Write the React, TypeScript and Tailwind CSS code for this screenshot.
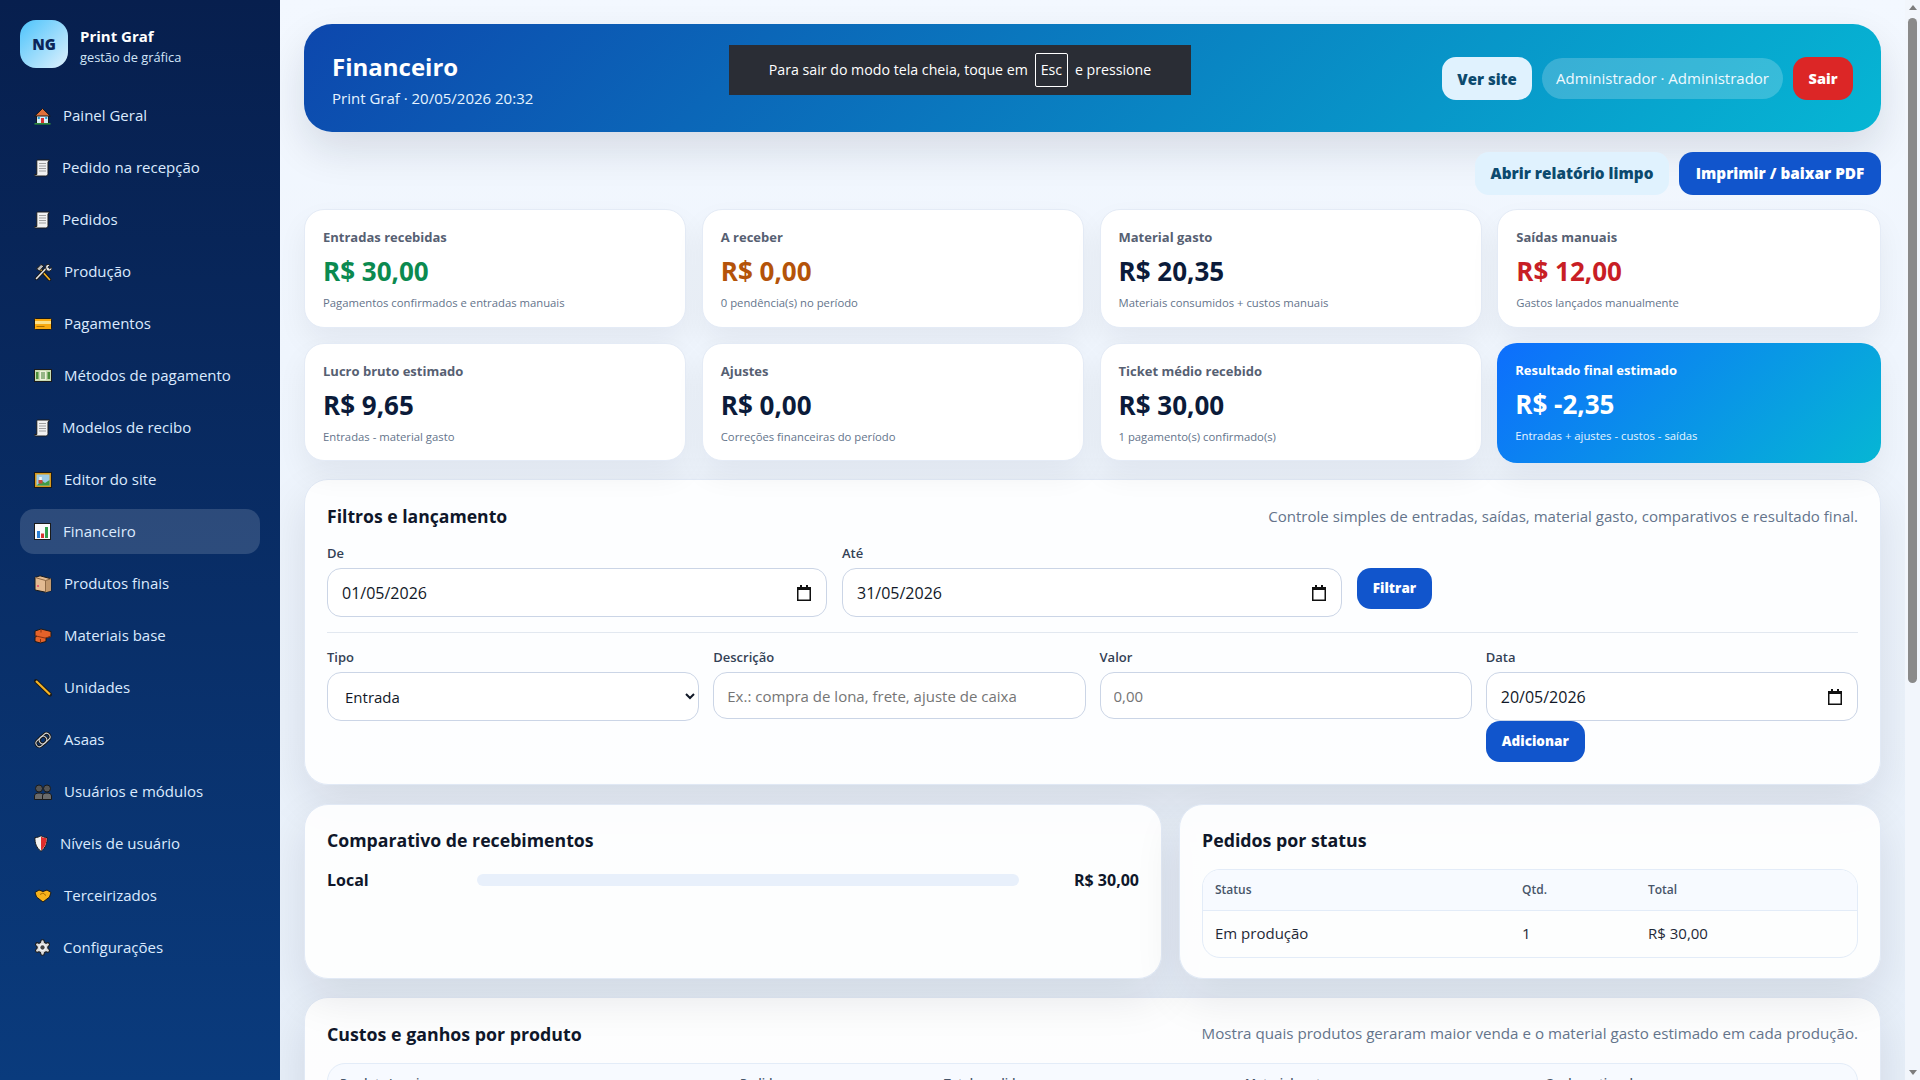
import React from 'react';

const Outline = '#1a1a1a';

const House = () => (
  <svg width="17" height="18" viewBox="0 0 17 18">
    <path d="M2.500 8h12v8.500h-12z" fill="#d9edf7" stroke={Outline} strokeWidth="1" />
    <path d="M0.800 9 8.500 1.500 16.200 9z" fill="#e0703a" stroke={Outline} strokeWidth="1" strokeLinejoin="round" />
    <rect x="7" y="11" width="3" height="5.500" fill="#d8322f" />
    <rect x="3.800" y="10" width="2" height="2" fill="#2a9fd6" />
    <rect x="11.200" y="10" width="2" height="2" fill="#2a9fd6" />
    <rect x="0.500" y="16" width="16" height="1.600" fill="#2e8b3d" />
  </svg>
);

const Receipt = () => (
  <svg width="16" height="18" viewBox="0 0 16 18">
    <path d="M3.500 1h12l-1.500 2v11.500c0 1.500-1 2.500-2.500 2.500H2c-1 0-1.500-.8-1.500-1.500h2.300V2.500C2.800 1.800 3 1 3.500 1z" fill="#f2f2f2" stroke={Outline} strokeWidth="1" strokeLinejoin="round" />
    <path d="M5 4.500h7M5 7h7M5 9.500h7M5 12h7" stroke="#a0a0a0" strokeWidth="1" />
  </svg>
);

const Tools = () => (
  <svg width="18" height="18" viewBox="0 0 18 18">
    <path d="M15.500 16.500 5 5" stroke={Outline} strokeWidth="3.400" strokeLinecap="round" />
    <path d="M15.500 16.500 5.500 5.500" stroke="#f5b324" strokeWidth="1.600" strokeLinecap="round" />
    <path d="M2.500 6 7 1.500l3 1.500-4.500 5z" fill="#bdbdbd" stroke={Outline} strokeWidth="1" strokeLinejoin="round" />
    <path d="M2.500 15.500 12 5.500" stroke={Outline} strokeWidth="3.400" strokeLinecap="round" />
    <path d="M2.500 15.500 12 5.500" stroke="#e4e4e4" strokeWidth="1.600" strokeLinecap="round" />
    <path d="M12 2.200c1.500-1 3-.9 4 0l-2 2 1.600 1.600 2-1.600c.6 1.600 0 3-1.600 3.800-1.200.5-2.600 0-3.400-.8-1-1.400-1.200-3.400-.6-5z" fill="#e4e4e4" stroke={Outline} strokeWidth="1" />
  </svg>
);

const Card = () => (
  <svg width="18" height="12" viewBox="0 0 18 12">
    <rect x="0.500" y="0.500" width="17" height="11" rx="1" fill="#f9a90f" stroke={Outline} strokeWidth="1" />
    <rect x="1" y="3" width="16" height="3" fill="#fbe08a" />
    <rect x="2.500" y="8" width="8" height="1" fill="#a86c00" />
  </svg>
);

const Money = () => (
  <svg width="18" height="13" viewBox="0 0 18 13">
    <rect x="0.500" y="0.500" width="17" height="12" fill="#c9dbb3" stroke={Outline} strokeWidth="1" />
    <rect x="6" y="2" width="6" height="9" fill="#eef3dc" />
    <path d="M2 3h2.500v7H2zM13.500 3H16v7h-2.500z" fill="#4d8f3c" />
    <path d="M8 3v7M10 3v7" stroke="#3f7a32" strokeWidth="1" />
  </svg>
);

const Picture = () => (
  <svg width="18" height="16" viewBox="0 0 18 16">
    <rect x="0.500" y="0.500" width="17" height="15" fill="#d79a1c" stroke={Outline} strokeWidth="1" />
    <rect x="2.500" y="2.500" width="13" height="11" fill="#9ccbe6" />
    <path d="M2.500 13.500 8 9l3 2 4.500-3v5.500z" fill="#3f9c44" />
    <rect x="4.500" y="8" width="4" height="3.500" fill="#c84b3a" />
    <rect x="5.300" y="5" width="2.500" height="3" fill="#f4f4f4" />
  </svg>
);

const Chart = () => (
  <svg width="17" height="17" viewBox="0 0 17 17">
    <rect x="0.500" y="0.500" width="16" height="16" fill="#fafafa" stroke={Outline} strokeWidth="1" />
    <rect x="3" y="8" width="3" height="7" fill="#2b7fd4" />
    <rect x="7" y="10.500" width="3" height="4.500" fill="#d8322f" />
    <rect x="11" y="4" width="3" height="11" fill="#32a04a" />
  </svg>
);

const Box = () => (
  <svg width="18" height="18" viewBox="0 0 18 18">
    <path d="M1 2.500 6 0.800l11 3v12l-5.500 1.400L1 15z" fill="#e3bb92" stroke={Outline} strokeWidth="1" strokeLinejoin="round" />
    <path d="M11.500 5.500 17 3.800v12l-5.500 1.400z" fill="#c49a6e" />
    <path d="M1 2.500 11.500 5.500 17 3.800M11.500 5.500v11.700" fill="none" stroke="#8f6a45" strokeWidth="1" />
    <circle cx="4" cy="11" r="1" fill="#e8476a" />
  </svg>
);

const Brick = () => (
  <svg width="18" height="16" viewBox="0 0 18 16">
    <path d="M1 3 7 1l10 2.500v5L12 10v3.500L6.500 15 1 13.500V9L3 8.400 1 7.800z" fill="#e4622a" stroke={Outline} strokeWidth="1" strokeLinejoin="round" />
    <path d="M1 7.800 11 10l6-1.500M7 1.500v3M6.500 15v-4" fill="none" stroke="#8a3210" strokeWidth="1" />
  </svg>
);

const Ruler = () => (
  <svg width="18" height="18" viewBox="0 0 18 18">
    <path d="M2 2 16 15.500" stroke={Outline} strokeWidth="4" strokeLinecap="round" />
    <path d="M2 2 16 15.500" stroke="#f5b324" strokeWidth="2.200" />
  </svg>
);

const Link = () => (
  <svg width="18" height="18" viewBox="0 0 18 18">
    <g transform="rotate(-42 9 9)" fill="none">
      <rect x="0.800" y="5.500" width="12" height="7" rx="3.500" stroke={Outline} strokeWidth="3" />
      <rect x="5.200" y="5.500" width="12" height="7" rx="3.500" stroke={Outline} strokeWidth="3" />
      <rect x="0.800" y="5.500" width="12" height="7" rx="3.500" stroke="#dcdcdc" strokeWidth="1" />
      <rect x="5.200" y="5.500" width="12" height="7" rx="3.500" stroke="#dcdcdc" strokeWidth="1" />
    </g>
  </svg>
);

const People = () => (
  <svg width="18" height="16" viewBox="0 0 18 16">
    <circle cx="5" cy="4.500" r="3.500" fill="#555555" stroke={Outline} strokeWidth="1" />
    <circle cx="13" cy="4.500" r="3.500" fill="#555555" stroke={Outline} strokeWidth="1" />
    <path d="M0.500 15.500v-3.500c0-2 2-3 4.500-3s4.500 1 4.500 3v3.500z" fill="#6a6a6a" stroke={Outline} strokeWidth="1" />
    <path d="M8.500 15.500v-3.500c0-2 2-3 4.500-3s4.500 1 4.500 3v3.500z" fill="#6a6a6a" stroke={Outline} strokeWidth="1" />
  </svg>
);

const Shield = () => (
  <svg width="14" height="17" viewBox="0 0 14 17">
    <path d="M1 2.500c2.200 0 4.300-.6 6-1.800 1.700 1.200 3.800 1.800 6 1.800 .4 5.500-1.500 10.500-6 13.800C2.500 13 .6 8 1 2.500z" fill="#f2f2f2" stroke={Outline} strokeWidth="1" strokeLinejoin="round" />
    <path d="M7 1.500c1.500 1 3.600 1.600 5.400 1.600.3 4.800-1.400 9.500-5.400 12.300z" fill="#e02c2c" />
  </svg>
);

const Handshake = () => (
  <svg width="18" height="14" viewBox="0 0 18 14">
    <path d="M1 3.500 5 1l4 1.500L13 1l4 2.500-1.500 4.500L9 13 2.500 8z" fill="#f7b21b" stroke={Outline} strokeWidth="1" strokeLinejoin="round" />
    <path d="M6 5.500 9 4l3 2.500" fill="none" stroke="#a86c00" strokeWidth="1" />
  </svg>
);

const Gear = () => (
  <svg width="17" height="17" viewBox="1 1 22 22">
    <path
      d="M12.220 2h-.44a2 2 0 0 0-2 2v.18a2 2 0 0 1-1 1.730l-.43.25a2 2 0 0 1-2 0l-.15-.08a2 2 0 0 0-2.730.73l-.22.38a2 2 0 0 0 .73 2.730l.15.1a2 2 0 0 1 1 1.720v.51a2 2 0 0 1-1 1.740l-.15.09a2 2 0 0 0-.73 2.730l.22.38a2 2 0 0 0 2.730.73l.15-.08a2 2 0 0 1 2 0l.43.25a2 2 0 0 1 1 1.730V20a2 2 0 0 0 2 2h.44a2 2 0 0 0 2-2v-.18a2 2 0 0 1 1-1.730l.43-.25a2 2 0 0 1 2 0l.15.08a2 2 0 0 0 2.730-.73l.22-.39a2 2 0 0 0-.73-2.730l-.15-.08a2 2 0 0 1-1-1.740v-.5a2 2 0 0 1 1-1.740l.15-.09a2 2 0 0 0 .73-2.730l-.22-.38a2 2 0 0 0-2.730-.73l-.15.08a2 2 0 0 1-2 0l-.43-.25a2 2 0 0 1-1-1.730V4a2 2 0 0 0-2-2z"
      fill="#dddddd"
      stroke={Outline}
      strokeWidth="1.400"
    />
    <circle cx="12" cy="12" r="4.400" fill="#f5f5f5" />
    <circle cx="12" cy="12" r="2.800" fill="#444444" />
  </svg>
);

const navItems: { label: string; icon: React.ReactNode; active?: boolean }[] = [
  { label: 'Painel Geral', icon: <House /> },
  { label: 'Pedido na recepção', icon: <Receipt /> },
  { label: 'Pedidos', icon: <Receipt /> },
  { label: 'Produção', icon: <Tools /> },
  { label: 'Pagamentos', icon: <Card /> },
  { label: 'Métodos de pagamento', icon: <Money /> },
  { label: 'Modelos de recibo', icon: <Receipt /> },
  { label: 'Editor do site', icon: <Picture /> },
  { label: 'Financeiro', icon: <Chart />, active: true },
  { label: 'Produtos finais', icon: <Box /> },
  { label: 'Materiais base', icon: <Brick /> },
  { label: 'Unidades', icon: <Ruler /> },
  { label: 'Asaas', icon: <Link /> },
  { label: 'Usuários e módulos', icon: <People /> },
  { label: 'Níveis de usuário', icon: <Shield /> },
  { label: 'Terceirizados', icon: <Handshake /> },
  { label: 'Configurações', icon: <Gear /> },
];

const metrics = [
  { label: 'Entradas recebidas', value: 'R$ 30,00', hint: 'Pagamentos confirmados e entradas manuais', color: 'text-[#0b8a50]' },
  { label: 'A receber', value: 'R$ 0,00', hint: '0 pendência(s) no período', color: 'text-[#b45309]' },
  { label: 'Material gasto', value: 'R$ 20,35', hint: 'Materiais consumidos + custos manuais', color: 'text-[#0b1b3a]' },
  { label: 'Saídas manuais', value: 'R$ 12,00', hint: 'Gastos lançados manualmente', color: 'text-[#c81e25]' },
  { label: 'Lucro bruto estimado', value: 'R$ 9,65', hint: 'Entradas - material gasto', color: 'text-[#0b1b3a]' },
  { label: 'Ajustes', value: 'R$ 0,00', hint: 'Correções financeiras do período', color: 'text-[#0b1b3a]' },
  { label: 'Ticket médio recebido', value: 'R$ 30,00', hint: '1 pagamento(s) confirmado(s)', color: 'text-[#0b1b3a]' },
];

const panel = 'rounded-[24px] border border-[#e1e9f5] bg-white/90 shadow-[0_18px_45px_rgba(15,23,42,0.1)]';
const fieldLabel = 'mb-[5px] block text-[13px] font-semibold leading-[20px] text-[#334155]';
const field = 'rounded-[14px] border border-[#cbd5e6] bg-white px-[13px] text-[15px] text-[#111827]';
const primaryBtn = 'rounded-[14px] bg-[#1155cc] text-[13.5px] font-extrabold text-white';
const lightBtn = 'h-[43px] rounded-[14px] bg-[#e0f2fe] font-extrabold text-[#0c4a6e]';

const CalendarIcon = () => (
  <svg width="14" height="16" viewBox="0 0 14 16" className="shrink-0">
    <path d="M3 0h2v2h4V0h2v2h3v14H0V2h3z" fill="#111111" />
    <rect x="1.500" y="5" width="11" height="9.500" fill="#ffffff" />
  </svg>
);

const DateField = ({ value }: { value: string }) => (
  <div className={`${field} flex h-[49px] items-center justify-between pl-[14px] pr-[15px]`}>
    <span className="text-[16px]">{value}</span>
    <CalendarIcon />
  </div>
);

const App: React.FC = () => {
  return (
    <div className="relative flex h-screen overflow-hidden bg-gradient-to-b from-[#f3f8ff] to-[#e7eff9] font-['Open_Sans',sans-serif]">
      <aside className="flex w-[280px] shrink-0 flex-col bg-gradient-to-b from-[#071f4e] to-[#0a3b7d] px-5 pt-5">
        <div className="flex items-center gap-3">
          <div className="flex h-12 w-12 items-center justify-center rounded-[16px] bg-[linear-gradient(135deg,#4cc3fb,#dff1fd)] text-[15px] font-extrabold text-[#0a2558]">
            NG
          </div>
          <div className="pt-[4px]">
            <div className="text-[15px] font-bold leading-[22px] text-white">Print Graf</div>
            <div className="text-[12.8px] leading-[20px] text-[#d3e6f8]">gestão de gráfica</div>
          </div>
        </div>
        <nav className="mt-[25px] flex flex-col gap-[7px]">
          {navItems.map((item) => (
            <a
              key={item.label}
              className={`flex h-[45px] items-center gap-[12px] rounded-[14px] px-[14px] text-[15px] text-[#dbeafe] ${item.active ? 'bg-white/15' : ''}`}
            >
              <span className="flex shrink-0 items-center">{item.icon}</span>
              {item.label}
            </a>
          ))}
        </nav>
      </aside>

      <main className="min-w-0 flex-1 overflow-hidden p-6">
        <header className="flex h-[108px] items-center justify-between rounded-[28px] bg-[linear-gradient(135deg,#0d47ad,#06b6d4)] px-[28px] text-white shadow-[0_18px_40px_rgba(15,23,42,0.12)]">
          <div>
            <h1 className="pt-[2px] text-[24px] font-bold leading-[34px]">Financeiro</h1>
            <p className="mt-[3px] text-[15px] leading-[22px] text-[#e6f4ff]">Print Graf · 20/05/2026 20:32</p>
          </div>
          <div className="flex items-center gap-[10px]">
            <button className={`${lightBtn} w-[90px] pt-[2px] text-[15px]`}>Ver site</button>
            <span className="flex h-[41px] w-[241px] items-center justify-center rounded-full bg-white/20 text-[15px] text-[#f0f9ff]">Administrador · Administrador</span>
            <button className="h-[43px] w-[60px] rounded-[14px] bg-[#dc2626] pt-[2px] text-[14.5px] font-extrabold text-white">Sair</button>
          </div>
        </header>

        <div className="mt-5 flex justify-end gap-[10px]">
          <button className={`${lightBtn} w-[194px] text-[15.3px]`}>Abrir relatório limpo</button>
          <button className="h-[43px] w-[202px] rounded-[14px] bg-[#1155cc] text-[15.3px] font-extrabold text-white">Imprimir / baixar PDF</button>
        </div>

        <section className="mt-[14px] grid grid-cols-[382px_382px_382px_1fr] gap-x-[15.75px] gap-y-[15px]">
          {metrics.map((m) => (
            <div key={m.label} className="h-[118.5px] rounded-[20px] border border-[#e4ebf6] bg-white px-[18px] pt-[17px] shadow-[0_14px_30px_rgba(15,23,42,0.06)]">
              <div className="text-[13px] font-bold leading-[20px] text-[#566072]">{m.label}</div>
              <div className={`mt-[6px] text-[26px] font-bold leading-[36px] ${m.color}`}>{m.value}</div>
              <div className="mt-[5px] text-[11.3px] leading-[18px] text-[#64748b]">{m.hint}</div>
            </div>
          ))}
          <div className="h-[120px] rounded-[20px] bg-[linear-gradient(135deg,#0d6efd,#06b6d4)] px-[18px] pt-[17px] text-white shadow-[0_14px_30px_rgba(15,23,42,0.06)]">
            <div className="text-[13px] font-bold leading-[20px]">Resultado final estimado</div>
            <div className="mt-[6px] text-[26px] font-bold leading-[36px]">R$ -2,35</div>
            <div className="mt-[5px] text-[11.3px] leading-[18px] text-[#e6f4ff]">Entradas + ajustes - custos - saídas</div>
          </div>
        </section>

        <section className={`${panel} mt-[16.5px] h-[305.5px] px-[22px] pt-[22px]`}>
          <div className="flex items-center justify-between">
            <h2 className="text-[17.6px] font-bold leading-[28px] text-[#0f172a]">Filtros e lançamento</h2>
            <p className="text-[15.05px] text-[#64748b]">Controle simples de entradas, saídas, material gasto, comparativos e resultado final.</p>
          </div>
          <div className="mt-[13px] grid grid-cols-[500px_500px_auto] items-start gap-x-[15px]">
            <div>
              <label className={fieldLabel}>De</label>
              <DateField value="01/05/2026" />
            </div>
            <div>
              <label className={fieldLabel}>Até</label>
              <DateField value="31/05/2026" />
            </div>
            <button className={`${primaryBtn} mt-[25px] h-[41px] w-[75px]`}>Filtrar</button>
          </div>
          <div className="mt-[15px] border-t border-[#e2e8f0]" />
          <div className="mt-[14px] grid grid-cols-4 items-start gap-x-[14px]">
            <div>
              <label className={fieldLabel}>Tipo</label>
              <select defaultValue="Entrada" className={`${field} h-[49px] w-full`}>
                <option>Entrada</option>
                <option>Saída</option>
              </select>
            </div>
            <div>
              <label className={fieldLabel}>Descrição</label>
              <input className={`${field} h-[47px] w-full placeholder:text-[#757575]`} placeholder="Ex.: compra de lona, frete, ajuste de caixa" />
            </div>
            <div>
              <label className={fieldLabel}>Valor</label>
              <input className={`${field} h-[47px] w-full placeholder:text-[#757575]`} placeholder="0,00" />
            </div>
            <div>
              <label className={fieldLabel}>Data</label>
              <DateField value="20/05/2026" />
              <button className={`${primaryBtn} block h-[41px] w-[99px]`}>Adicionar</button>
            </div>
          </div>
        </section>

        <section className="mt-[19px] grid grid-cols-[858fr_702fr] gap-[17px]">
          <div className={`${panel} h-[175px] px-[22px] pt-[21px]`}>
            <h2 className="text-[17.7px] font-bold leading-[28px] text-[#0f172a]">Comparativo de recebimentos</h2>
            <div className="mt-[14px] grid grid-cols-[150px_1fr_120px] items-center">
              <span className="text-[16px] font-bold text-[#0f172a]">Local</span>
              <div className="h-[12px] rounded-full bg-[#e8f0fb]" />
              <span className="text-right text-[16px] font-bold text-[#0f172a]">R$ 30,00</span>
            </div>
          </div>
          <div className={`${panel} h-[175px] px-[22px] pt-[21px]`}>
            <h2 className="text-[17.8px] font-bold leading-[28px] text-[#0f172a]">Pedidos por status</h2>
            <div className="mt-[15px] overflow-hidden rounded-[18px] border border-[#e3ecf8]">
              <div className="grid h-[41px] grid-cols-[307px_126px_1fr] items-center border-b border-[#e3ecf8] bg-[#f7faff] px-3 text-[12px] font-semibold text-[#475569]">
                <span>Status</span>
                <span>Qtd.</span>
                <span>Total</span>
              </div>
              <div className="grid h-[46px] grid-cols-[307px_126px_1fr] items-center px-3 text-[15px] text-[#1f2937]">
                <span>Em produção</span>
                <span>1</span>
                <span>R$ 30,00</span>
              </div>
            </div>
          </div>
        </section>

        <section className={`${panel} mt-[18px] h-[300px] px-[22px] pt-[22px]`}>
          <div className="flex items-center justify-between">
            <h2 className="text-[17.8px] font-bold leading-[28px] text-[#0f172a]">Custos e ganhos por produto</h2>
            <p className="text-[15.15px] text-[#64748b]">Mostra quais produtos geraram maior venda e o material gasto estimado em cada produção.</p>
          </div>
          <div className="mt-[15px] overflow-hidden rounded-[18px] border border-[#e3ecf8] bg-[#f7faff]">
            <div className="grid h-[41px] grid-cols-[400px_204px_301px_1fr_1fr] items-center px-3 text-[12px] font-semibold text-[#475569]">
              <span>Produto/serviço</span>
              <span>Pedidos</span>
              <span>Total vendido</span>
              <span>Material gasto</span>
              <span>Ganho estimado</span>
            </div>
          </div>
        </section>
      </main>

      <div className="flex w-[15px] shrink-0 flex-col items-center bg-[#f2f6fc]">
        <span className="mt-[5px] h-0 w-0 border-x-[4px] border-b-[5px] border-x-transparent border-b-[#7d7d7d]" />
        <span className="mt-[8px] h-[665px] w-[9px] rounded-full bg-[#8a8a8a]" />
        <span className="mt-auto mb-[5px] h-0 w-0 border-x-[4px] border-t-[5px] border-x-transparent border-t-[#7d7d7d]" />
      </div>

      <div className="absolute left-[729px] top-[45px] flex h-[50px] w-[462px] items-center justify-center gap-[7px] bg-[#2a2d35] text-[14.2px] text-white">
        <span>Para sair do modo tela cheia, toque em</span>
        <span className="flex h-[34px] w-[33px] items-center justify-center rounded-[2px] border border-white">Esc</span>
        <span>e pressione</span>
      </div>
    </div>
  );
};

export default App;
